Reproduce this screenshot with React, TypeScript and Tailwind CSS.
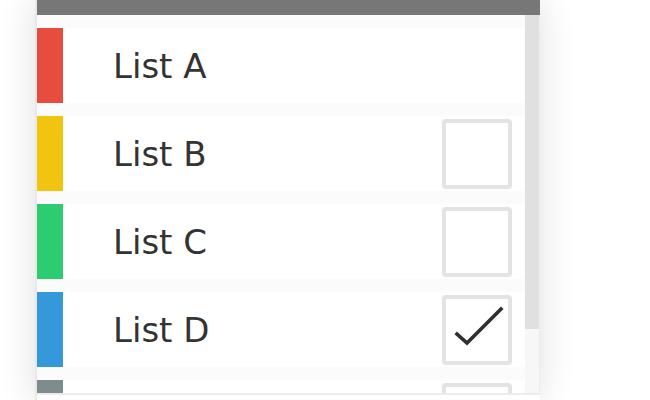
import React from "react";

const rows = [
  { name: "List A", color: "bg-[#e74c3c]", box: false, checked: false },
  { name: "List B", color: "bg-[#f1c40f]", box: true, checked: false },
  { name: "List C", color: "bg-[#2ecc71]", box: true, checked: false },
  { name: "List D", color: "bg-[#3498db]", box: true, checked: true },
  { name: "List E", color: "bg-[#7f8c8d]", box: true, checked: false },
];

export default function App() {
  return (
    <div className="w-[650px] h-[400px] bg-white overflow-hidden relative" style={{ fontFamily: '"DejaVu Sans", sans-serif' }}>
      <div className="ml-[35px] w-[505px] h-[400px] flex flex-col bg-white border-l-2 border-[#e8e8e8] shadow-[0_0_34px_rgba(0,0,0,0.13)]">
        <div className="h-[15px] bg-[#777777] shrink-0" />
        <div className="flex h-[378px] shrink-0">
          <div className="flex-1 overflow-hidden bg-[#fbfbfb] pt-[13px] flex flex-col gap-[13px]">
            {rows.map((r) => (
              <div key={r.name} className="h-[75px] shrink-0 bg-white flex items-center">
                <div className={`w-[26px] h-full ${r.color}`} />
                <div className="ml-[50px] flex-1 text-[34px] leading-none text-[#333333]">{r.name}</div>
                {r.box && (
                  <div className="w-[70px] h-[70px] mr-[13px] border-[4px] border-[#e3e3e3] rounded-[4px] bg-white">
                    {r.checked && (
                      <svg width="62" height="62" viewBox="0 0 62 62" className="block">
                        <path d="M11 35 L21 44 L55 10" fill="none" stroke="#2f2f2f" strokeWidth="3.6" strokeLinecap="square" strokeLinejoin="miter" />
                      </svg>
                    )}
                  </div>
                )}
              </div>
            ))}
          </div>
          <div className="w-[15px] bg-[#f7f7f7] border-r border-[#ececec] flex flex-col">
            <div className="h-[314px] bg-[#e0e0e0]" />
          </div>
        </div>
        <div className="flex-1 border-t-2 border-[#ececec] bg-white" />
      </div>
    </div>
  );
}
